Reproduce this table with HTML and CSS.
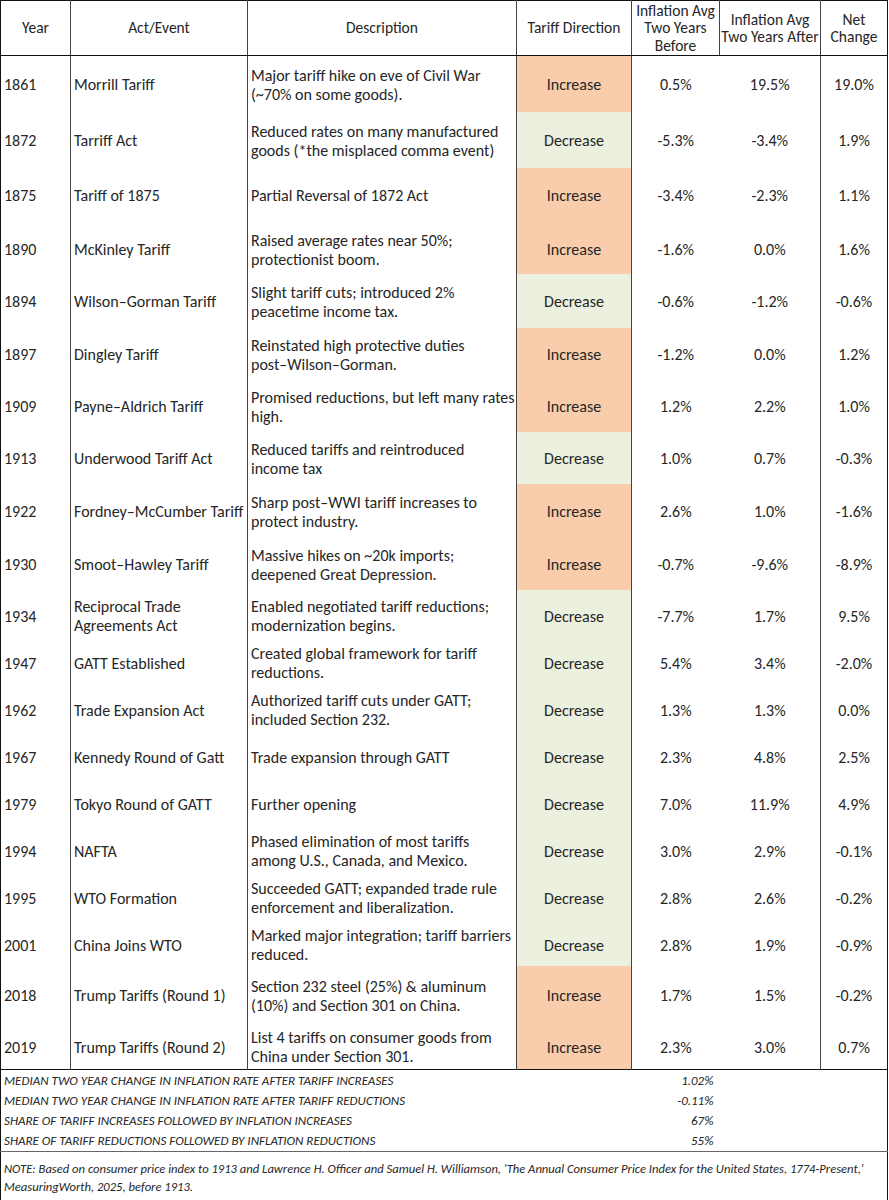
FILE: index.html
```html
<!DOCTYPE html>
<html lang="en">
<head>
<meta charset="utf-8">
<title>Tariffs and Inflation</title>
<link rel="stylesheet" href="styles.css">
</head>
<body>
<table class="tbl">
  <colgroup>
    <col class="c-year"><col class="c-act"><col class="c-desc"><col class="c-dir"><col class="c-bef"><col class="c-aft"><col class="c-net">
  </colgroup>
  <thead>
    <tr class="head">
      <th>Year</th>
      <th>Act/Event</th>
      <th>Description</th>
      <th>Tariff Direction</th>
      <th class="hb">Inflation Avg<br>Two Years<br>Before</th>
      <th>Inflation Avg<br>Two Years After</th>
      <th>Net<br>Change</th>
    </tr>
  </thead>
  <tbody class="body">
    <tr class="r56"><td>1861</td><td>Morrill Tariff</td><td>Major tariff hike on eve of Civil War<br>(~70% on some goods).</td><td class="inc">Increase</td><td class="n bef">0.5%</td><td class="n">19.5%</td><td class="n">19.0%</td></tr>
    <tr class="r56"><td>1872</td><td>Tarriff Act</td><td>Reduced rates on many manufactured<br>goods (*the misplaced comma event)</td><td class="dec">Decrease</td><td class="n bef">-5.3%</td><td class="n">-3.4%</td><td class="n">1.9%</td></tr>
    <tr class="r54"><td>1875</td><td>Tariff of 1875</td><td>Partial Reversal of 1872 Act</td><td class="inc">Increase</td><td class="n bef">-3.4%</td><td class="n">-2.3%</td><td class="n">1.1%</td></tr>
    <tr class="r52 mid"><td>1890</td><td>McKinley Tariff</td><td>Raised average rates near 50%;<br>protectionist boom.</td><td class="inc">Increase</td><td class="n bef">-1.6%</td><td class="n">0.0%</td><td class="n">1.6%</td></tr>
    <tr class="r54"><td>1894</td><td>Wilson–Gorman Tariff</td><td>Slight tariff cuts; introduced 2%<br>peacetime income tax.</td><td class="dec">Decrease</td><td class="n bef">-0.6%</td><td class="n">-1.2%</td><td class="n">-0.6%</td></tr>
    <tr class="r52"><td>1897</td><td>Dingley Tariff</td><td>Reinstated high protective duties<br>post–Wilson–Gorman.</td><td class="inc">Increase</td><td class="n bef">-1.2%</td><td class="n">0.0%</td><td class="n">1.2%</td></tr>
    <tr class="r52"><td>1909</td><td>Payne–Aldrich Tariff</td><td>Promised reductions, but left many rates<br>high.</td><td class="inc">Increase</td><td class="n bef">1.2%</td><td class="n">2.2%</td><td class="n">1.0%</td></tr>
    <tr class="r52"><td>1913</td><td>Underwood Tariff Act</td><td>Reduced tariffs and reintroduced<br>income tax</td><td class="dec">Decrease</td><td class="n bef">1.0%</td><td class="n">0.7%</td><td class="n">-0.3%</td></tr>
    <tr class="r54"><td>1922</td><td>Fordney–McCumber Tariff</td><td>Sharp post–WWI tariff increases to<br>protect industry.</td><td class="inc">Increase</td><td class="n bef">2.6%</td><td class="n">1.0%</td><td class="n">-1.6%</td></tr>
    <tr class="r52"><td>1930</td><td>Smoot–Hawley Tariff</td><td>Massive hikes on ~20k imports;<br>deepened Great Depression.</td><td class="inc">Increase</td><td class="n bef">-0.7%</td><td class="n">-9.6%</td><td class="n">-8.9%</td></tr>
    <tr class="r47"><td>1934</td><td>Reciprocal Trade<br>Agreements Act</td><td>Enabled negotiated tariff reductions;<br>modernization begins.</td><td class="dec">Decrease</td><td class="n bef">-7.7%</td><td class="n">1.7%</td><td class="n">9.5%</td></tr>
    <tr class="r47"><td>1947</td><td>GATT Established</td><td>Created global framework for tariff<br>reductions.</td><td class="dec">Decrease</td><td class="n bef">5.4%</td><td class="n">3.4%</td><td class="n">-2.0%</td></tr>
    <tr class="r47"><td>1962</td><td>Trade Expansion Act</td><td>Authorized tariff cuts under GATT;<br>included Section 232.</td><td class="dec">Decrease</td><td class="n bef">1.3%</td><td class="n">1.3%</td><td class="n">0.0%</td></tr>
    <tr class="r47"><td>1967</td><td>Kennedy Round of Gatt</td><td>Trade expansion through GATT</td><td class="dec">Decrease</td><td class="n bef">2.3%</td><td class="n">4.8%</td><td class="n">2.5%</td></tr>
    <tr class="r47"><td>1979</td><td>Tokyo Round of GATT</td><td>Further opening</td><td class="dec">Decrease</td><td class="n bef">7.0%</td><td class="n">11.9%</td><td class="n">4.9%</td></tr>
    <tr class="r47"><td>1994</td><td>NAFTA</td><td>Phased elimination of most tariffs<br>among U.S., Canada, and Mexico.</td><td class="dec">Decrease</td><td class="n bef">3.0%</td><td class="n">2.9%</td><td class="n">-0.1%</td></tr>
    <tr class="r47"><td>1995</td><td>WTO Formation</td><td>Succeeded GATT; expanded trade rule<br>enforcement and liberalization.</td><td class="dec">Decrease</td><td class="n bef">2.8%</td><td class="n">2.6%</td><td class="n">-0.2%</td></tr>
    <tr class="r47"><td>2001</td><td>China Joins WTO</td><td>Marked major integration; tariff barriers<br>reduced.</td><td class="dec">Decrease</td><td class="n bef">2.8%</td><td class="n">1.9%</td><td class="n">-0.9%</td></tr>
    <tr class="r52 lo"><td>2018</td><td>Trump Tariffs (Round 1)</td><td>Section 232 steel (25%) &amp; aluminum<br>(10%) and Section 301 on China.</td><td class="inc">Increase</td><td class="n bef">1.7%</td><td class="n">1.5%</td><td class="n">-0.2%</td></tr>
    <tr class="r52 lo"><td>2019</td><td>Trump Tariffs (Round 2)</td><td>List 4 tariffs on consumer goods from<br>China under Section 301.</td><td class="inc">Increase</td><td class="n bef">2.3%</td><td class="n">3.0%</td><td class="n">0.7%</td></tr>
  </tbody>
  <tbody class="summary">
    <tr class="first"><td colspan="4">MEDIAN TWO YEAR CHANGE IN INFLATION RATE AFTER TARIFF INCREASES</td><td class="val">1.02%</td><td colspan="2"></td></tr>
    <tr><td colspan="4">MEDIAN TWO YEAR CHANGE IN INFLATION RATE AFTER TARIFF REDUCTIONS</td><td class="val">-0.11%</td><td colspan="2"></td></tr>
    <tr><td colspan="4">SHARE OF TARIFF INCREASES FOLLOWED BY INFLATION INCREASES</td><td class="val">67%</td><td colspan="2"></td></tr>
    <tr><td colspan="4">SHARE OF TARIFF REDUCTIONS FOLLOWED BY INFLATION REDUCTIONS</td><td class="val">55%</td><td colspan="2"></td></tr>
  </tbody>
  <tfoot class="note">
    <tr><td colspan="7">NOTE: Based on consumer price index to 1913 and Lawrence H. Officer and Samuel H. Williamson, 'The Annual Consumer Price Index for the United States, 1774-Present,'<br>MeasuringWorth, 2025, before 1913.</td></tr>
  </tfoot>
</table>
</body>
</html>
```
FILE: styles.css
```css
html, body {
  margin: 0;
  padding: 0;
  background: #ffffff;
}

body {
  font-family: Carlito, Lato, "Open Sans", sans-serif;
  color: #262626;
}

.tbl {
  width: 887px;
  table-layout: fixed;
  border-collapse: collapse;
  border: 1px solid #111;
}

.c-year { width: 70px; }
.c-act { width: 177px; }
.c-desc { width: 269px; }
.c-dir { width: 115px; }
.c-bef { width: 88px; }
.c-aft { width: 101px; }
.c-net { width: 67px; }

.head th {
  height: 54px;
  padding: 0 1px;
  font-weight: normal;
  font-size: 15.5px;
  line-height: 17.5px;
  text-align: center;
  vertical-align: middle;
  border-left: 1px solid #444;
  border-bottom: 1px solid #111;
  white-space: nowrap;
}

.head th:first-child { border-left: none; }

.body td {
  padding: 2px 1px 0 3px;
  font-size: 16px;
  line-height: 19px;
  vertical-align: middle;
  white-space: nowrap;
  overflow: visible;
  border-left: 1px solid #444;
}

.body td:first-child {
  border-left: none;
  padding-left: 3px;
}

.body td.n,
.body td.inc,
.body td.dec {
  text-align: center;
  padding-left: 0;
  padding-right: 0;
}

.body td.bef + td.n { border-left: none; }

.inc { background: #f9cdac; }
.dec { background: #ebf0df; }

.r56 { height: 56px; }
.r54 { height: 54px; }
.r52 { height: 52px; }
.r47 { height: 47px; }

.body .r47 td { padding-top: 6px; }
.body .mid td { padding-top: 4px; }
.body .lo td { padding-top: 8px; }

.summary td {
  height: 20px;
  padding: 0 3px;
  font-size: 13px;
  font-style: italic;
  line-height: 20px;
  white-space: nowrap;
  vertical-align: middle;
}

.summary tr.first td {
  border-top: 1px solid #111;
  padding-top: 1px;
}

.summary td.val {
  text-align: right;
  padding-right: 6px;
}

.note td {
  height: 46px;
  padding: 3px 3px 0;
  font-size: 12.6px;
  font-style: italic;
  line-height: 18px;
  white-space: nowrap;
  vertical-align: middle;
  border-top: 1px solid #666;
}
```
